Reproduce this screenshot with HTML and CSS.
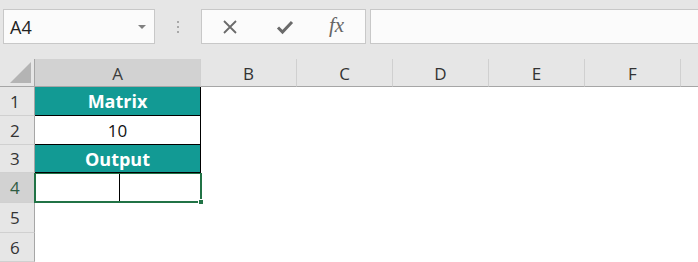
FILE: index.html
```html
<!DOCTYPE html>
<html>
<head>
<meta charset="utf-8">
<link rel="stylesheet" href="styles.css">
</head>
<body>
<div class="app">
  <div class="toolbar">
    <div class="namebox">
      <span class="ref">A4</span>
      <span class="caret"></span>
    </div>
    <div class="grip"><i></i><i></i><i></i></div>
    <div class="fbtns">
      <svg class="ic-x" width="16" height="16" viewBox="0 0 16 16"><path d="M2 2 L14 14 M14 2 L2 14" stroke="#6a6a6a" stroke-width="1.8" fill="none"/></svg>
      <svg class="ic-ok" width="18" height="16" viewBox="0 0 18 16"><path d="M2 8.5 L6.5 13 L16 3" stroke="#6a6a6a" stroke-width="3" fill="none"/></svg>
      <span class="fx">fx</span>
    </div>
    <div class="fbar"></div>
  </div>
  <div class="sheet">
    <div class="corner"><span class="tri"></span></div>
    <div class="ch sel">A</div>
    <div class="ch">B</div>
    <div class="ch">C</div>
    <div class="ch">D</div>
    <div class="ch">E</div>
    <div class="ch">F</div>
    <div class="ch last"></div>

    <div class="rh">1</div>
    <div class="c t top">Matrix</div>
    <div class="c e"></div><div class="c e"></div><div class="c e"></div><div class="c e"></div><div class="c e"></div><div class="c e"></div>

    <div class="rh">2</div>
    <div class="c w">10</div>
    <div class="c e"></div><div class="c e"></div><div class="c e"></div><div class="c e"></div><div class="c e"></div><div class="c e"></div>

    <div class="rh">3</div>
    <div class="c t">Output</div>
    <div class="c e"></div><div class="c e"></div><div class="c e"></div><div class="c e"></div><div class="c e"></div><div class="c e"></div>

    <div class="rh sel">4</div>
    <div class="c active"><span class="half"></span><span class="handle"></span></div>
    <div class="c e"></div><div class="c e"></div><div class="c e"></div><div class="c e"></div><div class="c e"></div><div class="c e"></div>

    <div class="rh">5</div>
    <div class="c e"></div><div class="c e"></div><div class="c e"></div><div class="c e"></div><div class="c e"></div><div class="c e"></div><div class="c e"></div>

    <div class="rh">6</div>
    <div class="c e"></div><div class="c e"></div><div class="c e"></div><div class="c e"></div><div class="c e"></div><div class="c e"></div><div class="c e"></div>
  </div>
</div>
</body>
</html>
```

FILE: styles.css
```css
* { box-sizing: border-box; }
html, body { margin: 0; padding: 0; }
body {
  width: 698px;
  height: 262px;
  overflow: hidden;
  background: #ffffff;
  font-family: "Open Sans", "Liberation Sans", sans-serif;
}
.app { display: flex; flex-direction: column; }

.toolbar {
  height: 59px;
  background: #e6e6e6;
  display: flex;
  align-items: flex-start;
  padding: 9px 0 0 3px;
}
.namebox {
  width: 152px;
  height: 35px;
  background: #fbfbfb;
  border: 1px solid #c8c8c8;
  display: flex;
  align-items: center;
  justify-content: space-between;
  padding: 0 8px 0 6px;
}
.ref { font-size: 18px; color: #222; }
.caret {
  width: 0; height: 0;
  border-left: 4px solid transparent;
  border-right: 4px solid transparent;
  border-top: 4px solid #808080;
  margin-top: 1px;
}
.grip {
  width: 46px;
  height: 35px;
  display: flex;
  flex-direction: column;
  align-items: center;
  justify-content: center;
  gap: 3px;
}
.grip i { display: block; width: 2px; height: 2px; background: #a8a8a8; }
.fbtns {
  width: 165px;
  height: 35px;
  background: #fbfbfb;
  border: 1px solid #c8c8c8;
  display: flex;
  align-items: center;
  padding-left: 20px;
}
.ic-x { margin-right: 38px; }
.ic-ok { margin-right: 35px; }
.fx {
  font-family: "Liberation Serif", serif;
  font-style: italic;
  font-size: 21px;
  color: #666;
  margin-top: -3px;
}
.fbar {
  flex: 1;
  height: 35px;
  margin-left: 4px;
  background: #fbfbfb;
  border: 1px solid #c8c8c8;
  border-right: none;
}

.sheet {
  display: grid;
  grid-template-columns: 35px 166px 96px 96px 96px 96px 96px 17px;
  grid-template-rows: 28px 29px 29px 28px 30px 30px 29px;
}
.corner {
  background: #e6e6e6;
  border-right: 1px solid #a6a6a6;
  border-bottom: 1px solid #a6a6a6;
  position: relative;
}
.tri {
  position: absolute;
  right: 3px;
  bottom: 3px;
  width: 0; height: 0;
  border-left: 21px solid transparent;
  border-bottom: 21px solid #b4b4b4;
}
.ch {
  background: #e6e6e6;
  border-right: 1px solid #d0d0d0;
  border-bottom: 1px solid #a6a6a6;
  display: flex;
  align-items: center;
  justify-content: center;
  font-size: 17px;
  color: #333;
  padding-top: 2px;
}
.ch.sel { background: #d2d2d2; color: #3c3c3c; }
.ch.last { border-right: none; }
.rh {
  background: #e6e6e6;
  border-right: 1px solid #a6a6a6;
  border-bottom: 1px solid #d0d0d0;
  display: flex;
  align-items: center;
  justify-content: flex-start;
  padding-left: 10px;
  font-size: 17px;
  color: #333;
}
.rh.sel { background: #d2d2d2; color: #2f5d44; }
.c { background: #fff; }
.t {
  background: #129a94;
  color: #fff;
  font-weight: 700;
  font-size: 18px;
  display: flex;
  align-items: center;
  justify-content: center;
  border-right: 1px solid #000;
  border-bottom: 1px solid #000;
}
.w {
  color: #111;
  font-size: 17px;
  display: flex;
  align-items: center;
  justify-content: center;
  border-right: 1px solid #000;
  border-bottom: 1px solid #000;
}
.active {
  position: relative;
  border: 2px solid #217346;
  border-top-width: 1px;
  margin-left: -1px;
  margin-right: -1px;
  display: flex;
}
.half {
  width: 84px;
  height: 100%;
  border-right: 1px solid #000;
}
.handle {
  position: absolute;
  right: -4px;
  bottom: -4px;
  width: 6px;
  height: 6px;
  background: #217346;
  border: 1px solid #fff;
}
```
